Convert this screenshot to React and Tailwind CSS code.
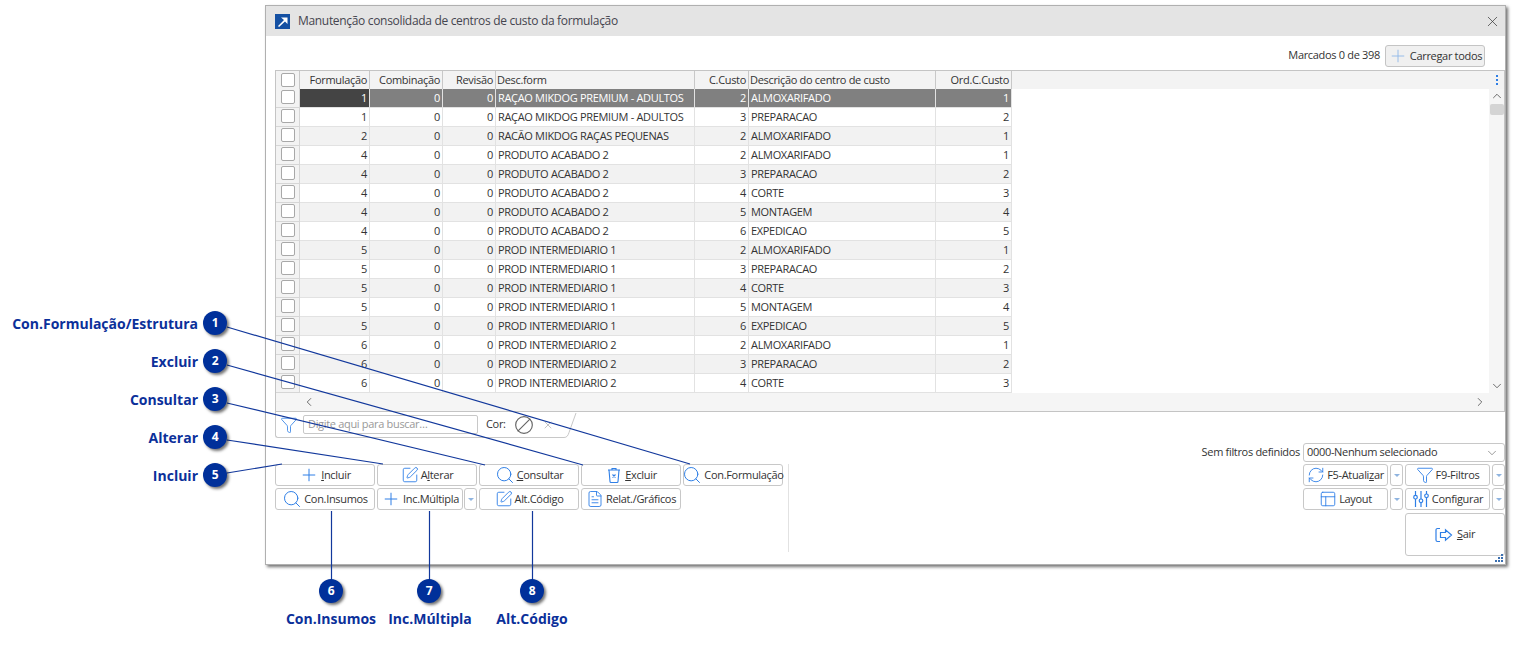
import { Plus, SquarePen, Search, FileText, RefreshCw, Funnel, PanelsTopLeft, Ban, X, ChevronDown, ChevronUp, ChevronLeft, ChevronRight } from "lucide-react";

const cols = "grid-cols-[24px_70px_73px_53px_199px_54px_187px_76px]";

const rows = [
  [1, "RAÇAO MIKDOG PREMIUM - ADULTOS", 2, "ALMOXARIFADO", 1],
  [1, "RAÇAO MIKDOG PREMIUM - ADULTOS", 3, "PREPARACAO", 2],
  [2, "RACÃO MIKDOG RAÇAS PEQUENAS", 2, "ALMOXARIFADO", 1],
  [4, "PRODUTO ACABADO 2", 2, "ALMOXARIFADO", 1],
  [4, "PRODUTO ACABADO 2", 3, "PREPARACAO", 2],
  [4, "PRODUTO ACABADO 2", 4, "CORTE", 3],
  [4, "PRODUTO ACABADO 2", 5, "MONTAGEM", 4],
  [4, "PRODUTO ACABADO 2", 6, "EXPEDICAO", 5],
  [5, "PROD INTERMEDIARIO 1", 2, "ALMOXARIFADO", 1],
  [5, "PROD INTERMEDIARIO 1", 3, "PREPARACAO", 2],
  [5, "PROD INTERMEDIARIO 1", 4, "CORTE", 3],
  [5, "PROD INTERMEDIARIO 1", 5, "MONTAGEM", 4],
  [5, "PROD INTERMEDIARIO 1", 6, "EXPEDICAO", 5],
  [6, "PROD INTERMEDIARIO 2", 2, "ALMOXARIFADO", 1],
  [6, "PROD INTERMEDIARIO 2", 3, "PREPARACAO", 2],
  [6, "PROD INTERMEDIARIO 2", 4, "CORTE", 3],
];

const callouts = [
  { n: 1, label: "Con.Formulação/Estrutura", text: "top-[323px]", badge: "top-[311px]" },
  { n: 2, label: "Excluir", text: "top-[361px]", badge: "top-[349px]" },
  { n: 3, label: "Consultar", text: "top-[399px]", badge: "top-[387px]" },
  { n: 4, label: "Alterar", text: "top-[437px]", badge: "top-[425px]" },
  { n: 5, label: "Incluir", text: "top-[475px]", badge: "top-[463px]" },
];

const bottomCallouts = [
  { n: 6, label: "Con.Insumos", text: "left-[331px]", badge: "left-[319px]" },
  { n: 7, label: "Inc.Múltipla", text: "left-[430px]", badge: "left-[417px]" },
  { n: 8, label: "Alt.Código", text: "left-[532px]", badge: "left-[520px]" },
];

function Check() {
  return <span className="block h-[14px] w-[14px] rounded-[2px] border border-[#a8a8a8] bg-white" />;
}

// trash can with a small x on its body
function TrashIcon({ size, className }) {
  return (
    <svg width={size} height={size} viewBox="0 0 18 18" fill="none" stroke="currentColor" strokeWidth="1.1" className={className}>
      <path d="M3 4h12M7 4V2.500h4V4" />
      <path d="M4 4l1 11.500a1 1 0 0 0 1 1h6a1 1 0 0 0 1-1L14 4" />
      <path d="M7.500 8.500l3 3M10.500 8.500l-3 3" />
    </svg>
  );
}

// three vertical sliders with round knobs
function SlidersIcon({ size, className }) {
  return (
    <svg width={size} height={size} viewBox="0 0 18 18" fill="none" stroke="currentColor" strokeWidth="1.2" className={className}>
      <path d="M3.500 1v4.500M3.500 9v8M9 1v8M9 12.500V17M14.500 1v3M14.500 7.500V17" />
      <circle cx="3.500" cy="7.200" r="1.800" />
      <circle cx="9" cy="10.800" r="1.800" />
      <circle cx="14.500" cy="5.800" r="1.800" />
    </svg>
  );
}

function Btn({ icon: Icon, children, className = "w-[100px]", size = 18 }) {
  return (
    <button className={`flex h-[22px] items-center justify-center gap-[2px] rounded-[3px] border border-[#c8c8c8] bg-white text-[11px] text-[#333] ${className}`}>
      {Icon && <Icon size={size} strokeWidth={1.2} className="shrink-0 text-[#2f7fe6]" />}
      <span>{children}</span>
    </button>
  );
}

function Arrow() {
  return (
    <button className="flex h-[22px] w-[13px] items-center justify-center rounded-[3px] border border-[#c8c8c8] bg-white">
      <span className="mt-[1px] border-x-[3px] border-t-[3px] border-x-transparent border-t-[#8fb4e0]" />
    </button>
  );
}

function Badge({ n, className }) {
  return (
    <span className={`absolute flex h-[24px] w-[24px] items-center justify-center rounded-full bg-[#00309a] text-[12px] font-bold text-white shadow-[2px_2px_3px_rgba(0,0,0,0.55)] ${className}`}>
      {n}
    </span>
  );
}

function SairIcon() {
  return (
    <svg width="18" height="16" viewBox="0 0 18 16" fill="none" stroke="#2f7fe6" strokeWidth="1.2">
      <path d="M5 1.500H2.500a1.500 1.500 0 0 0-1.500 1.500v10a1.500 1.500 0 0 0 1.500 1.500H5" />
      <path d="M5.500 5.500h5V2.800L16.500 8l-6 5.200v-2.700h-5z" />
    </svg>
  );
}

function Grid() {
  return (
    <div className="relative h-[342px] w-[1230px] border border-[#c4c4c4] bg-white">
      <div className="flex h-[18px] bg-[#f3f3f3]">
        <div className={`grid ${cols} text-[11px] text-[#333]`}>
          <div className="flex items-center justify-center border-r border-[#c8c8c8]"><Check /></div>
          <div className="border-r border-[#c8c8c8] pr-[2px] text-right leading-[17px]">Formulação</div>
          <div className="border-r border-[#c8c8c8] pr-[2px] text-right leading-[17px]">Combinação</div>
          <div className="border-r border-[#c8c8c8] pr-[2px] text-right leading-[17px]">Revisão</div>
          <div className="border-r border-[#c8c8c8] pl-[1px] leading-[17px]">Desc.form</div>
          <div className="border-r border-[#c8c8c8] pr-[2px] text-right leading-[17px]">C.Custo</div>
          <div className="border-r border-[#c8c8c8] pl-[1px] leading-[17px]">Descrição do centro de custo</div>
          <div className="border-r border-[#c8c8c8] pr-[2px] text-right leading-[17px]">Ord.C.Custo</div>
        </div>
        <div className="ml-auto flex w-[15px] flex-col items-center justify-center gap-[2px]">
          <span className="h-[2px] w-[2px] bg-[#2f7fe6]" />
          <span className="h-[2px] w-[2px] bg-[#2f7fe6]" />
          <span className="h-[2px] w-[2px] bg-[#2f7fe6]" />
        </div>
      </div>
      <div className="flex h-[304px]">
        <div className="w-[736px] overflow-hidden">
          {rows.map((r, i) => {
            const sel = i === 0;
            const bg = sel ? "bg-[#808080] text-white" : i % 2 === 0 ? "bg-[#f2f2f2] text-[#333]" : "bg-white text-[#333]";
            return (
              <div key={i} className={`grid h-[19px] ${cols} text-[11px] leading-[18px]`}>
                <div className="flex items-start justify-center border-r border-b border-[#d6d6d6] bg-[#f3f3f3] pt-[1px]"><Check /></div>
                <div className={`border-r border-b border-[#e2e2e2] pr-[2px] text-right ${sel ? "bg-[#444] text-white" : bg}`}>{r[0]}</div>
                <div className={`border-r border-b border-[#e2e2e2] pr-[2px] text-right ${bg}`}>0</div>
                <div className={`border-r border-b border-[#e2e2e2] pr-[2px] text-right ${bg}`}>0</div>
                <div className={`truncate border-r border-b border-[#e2e2e2] pl-[2px] ${bg}`}>{r[1]}</div>
                <div className={`border-r border-b border-[#e2e2e2] pr-[2px] text-right ${bg}`}>{r[2]}</div>
                <div className={`border-r border-b border-[#e2e2e2] pl-[2px] ${bg}`}>{r[3]}</div>
                <div className={`border-r border-b border-[#e2e2e2] pr-[2px] text-right ${bg}`}>{r[4]}</div>
              </div>
            );
          })}
        </div>
        <div className="ml-auto flex w-[15px] flex-col items-center bg-[#f5f5f5]">
          <ChevronUp size={14} strokeWidth={1.2} className="text-[#333]" />
          <div className="mt-[1px] h-[11px] w-[14px] rounded-[2px] bg-[#d4d4d4]" />
          <ChevronDown size={14} strokeWidth={1.2} className="mt-auto text-[#333]" />
        </div>
      </div>
      <div className="flex h-[18px] items-center justify-between bg-[#f5f5f5] pl-[26px] pr-[17px]">
        <ChevronLeft size={14} strokeWidth={1.2} className="text-[#333]" />
        <ChevronRight size={14} strokeWidth={1.2} className="text-[#333]" />
      </div>
    </div>
  );
}

export default function App() {
  return (
    <div className="relative h-[645px] w-[1540px] overflow-hidden bg-white font-['Open_Sans','Liberation_Sans',sans-serif] tracking-[-0.32px]">
      {/* the dialog */}
      <div className="absolute left-[265px] top-[5px] h-[560px] w-[1241px] border border-[#b0b0b0] bg-white shadow-[2px_2px_3px_rgba(0,0,0,0.55)]">
        <div className="flex h-[30px] items-center bg-[#e4e4e4] pl-[9px] pr-[4px]">
          <span className="flex h-[15px] w-[15px] items-center justify-center bg-[#1450a3]">
            <svg width="11" height="11" viewBox="0 0 11 11" fill="white"><path d="M1 10 7 4 4 1.500h6.500V8L8 5.500 2 11z" /></svg>
          </span>
          <span className="ml-[8px] text-[12px] text-[#45454f]">Manutenção consolidada de centros de custo da formulação</span>
          <X size={17} strokeWidth={1} className="ml-auto text-[#333]" />
        </div>
        <div className="flex h-[34px] items-start justify-end gap-[5px] pr-[20px] pt-[9px] text-[11px] text-[#333]">
          <span className="leading-[20px]">Marcados 0 de 398</span>
          <button className="flex h-[22px] w-[100px] items-center justify-center gap-[2px] rounded-[3px] border border-[#c4c4c4] bg-[#f0f0f0]">
            <Plus size={20} strokeWidth={1.1} className="text-[#8fb8e8]" />
            <span>Carregar todos</span>
          </button>
        </div>
        <div className="pl-[9px]">
          <Grid />
          {/* search tab */}
          <div className="flex h-[26px]">
            <div className="flex w-[288px] items-center rounded-bl-[3px] border-b border-l border-[#c8c8c8] pl-[4px] text-[11px] text-[#333]">
              <Funnel size={18} strokeWidth={1.1} className="text-[#2f7fe6]" />
              <div className="ml-[5px] flex h-[19px] w-[175px] items-center rounded-[2px] border border-[#c8c8c8] pl-[4px] text-[#999]">Digite aqui para buscar…</div>
              <span className="ml-[8px]">Cor:</span>
              <Ban size={20} strokeWidth={1.4} className="ml-[8px] rotate-90 text-[#666]" />
              <X size={12} strokeWidth={1} className="ml-[8px] text-[#888]" />
            </div>
            <svg width="14" height="26" viewBox="0 0 14 26" fill="none" stroke="#c8c8c8">
              <path d="M0 25.500h1c3 0 4-2 5-5L13 1" />
            </svg>
          </div>
          <div className="mt-[5px] flex justify-between">
            <div className="mt-[21px] flex h-[88px] w-[514px] flex-col gap-[2px] border-r border-[#e2e2e2]">
              <div className="flex gap-[2px]">
                <Btn icon={Plus} size={20}><u>I</u>ncluir</Btn>
                <Btn icon={SquarePen}>A<u>l</u>terar</Btn>
                <Btn icon={Search} size={20}><u>C</u>onsultar</Btn>
                <Btn icon={TrashIcon}><u>E</u>xcluir</Btn>
                <Btn icon={Search} size={20}>Con.Formulação</Btn>
              </div>
              <div className="flex gap-[2px]">
                <Btn icon={Search} size={20}>Con.Insumos</Btn>
                <Btn icon={Plus} size={20} className="w-[86px]">Inc.Múltipla</Btn>
                <span className="-ml-[1px]"><Arrow /></span>
                <Btn icon={SquarePen}>Alt.Código</Btn>
                <Btn icon={FileText}>Relat./Gráficos</Btn>
              </div>
            </div>
            <div className="flex w-[310px] flex-col items-end gap-[2px]">
              <div className="flex items-center gap-[3px] whitespace-nowrap text-[11px] text-[#333]">
                <span>Sem filtros definidos</span>
                <div className="flex h-[19px] w-[202px] items-center justify-between rounded-[3px] border border-[#c8c8c8] pl-[3px] pr-[5px]">
                  <span>0000-Nenhum selecionado</span>
                  <ChevronDown size={14} strokeWidth={1} className="text-[#555]" />
                </div>
              </div>
              <div className="flex gap-[2px]">
                <Btn icon={RefreshCw} className="w-[85px]">F5-Atuali<u>z</u>ar</Btn>
                <Arrow />
                <Btn icon={Funnel} className="w-[85px]">F9-Filtros</Btn>
                <Arrow />
              </div>
              <div className="flex gap-[2px]">
                <Btn icon={PanelsTopLeft} className="w-[85px]">Layout</Btn>
                <Arrow />
                <Btn icon={SlidersIcon} className="w-[85px]">Configurar</Btn>
                <Arrow />
              </div>
              <button className="mt-[1px] flex h-[43px] w-[100px] items-center justify-center gap-[4px] rounded-[3px] border border-[#c8c8c8] bg-white text-[11px] text-[#333]">
                <SairIcon />
                <span><u>S</u>air</span>
              </button>
            </div>
          </div>
        </div>
        <svg className="absolute bottom-[1px] right-[1px]" width="9" height="9" viewBox="0 0 9 9" fill="#3b6fb0">
          <rect x="6" y="0" width="2" height="2" /><rect x="3" y="3" width="2" height="2" /><rect x="6" y="3" width="2" height="2" />
          <rect x="0" y="6" width="2" height="2" /><rect x="3" y="6" width="2" height="2" /><rect x="6" y="6" width="2" height="2" />
        </svg>
      </div>

      {/* callout leader lines */}
      <svg className="pointer-events-none absolute left-0 top-0" width="1540" height="645" fill="none" stroke="#12389c" strokeWidth="1.2">
        <path d="M227 327 690 464" />
        <path d="M227 365 583 465" />
        <path d="M227 403 485 465" />
        <path d="M227 440 383 464" />
        <path d="M227 473 282 464" />
        <path d="M331.500 511V580" />
        <path d="M429.500 511V580" />
        <path d="M532.500 511V580" />
      </svg>

      {callouts.map((c) => (
        <div key={c.n}>
          <span className={`absolute right-[1342px] -translate-y-1/2 whitespace-nowrap text-[14px] font-bold tracking-normal text-[#0b309a] ${c.text}`}>{c.label}</span>
          <Badge n={c.n} className={`left-[203px] ${c.badge}`} />
        </div>
      ))}
      {bottomCallouts.map((c) => (
        <div key={c.n}>
          <span className={`absolute top-[618px] -translate-x-1/2 -translate-y-1/2 whitespace-nowrap text-[14px] font-bold tracking-normal text-[#0b309a] ${c.text}`}>{c.label}</span>
          <Badge n={c.n} className={`top-[579px] ${c.badge}`} />
        </div>
      ))}
    </div>
  );
}
